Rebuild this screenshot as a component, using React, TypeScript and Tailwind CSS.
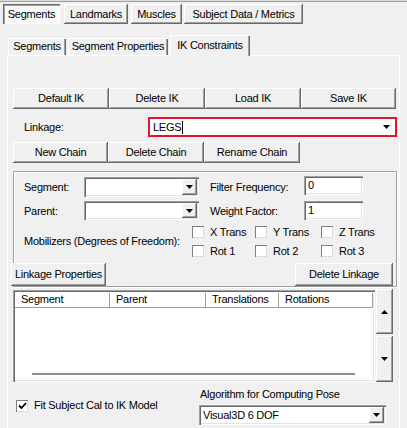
const raised =
  'bg-[#f0f0f0] shadow-[inset_-1px_-1px_#696969,inset_1px_1px_#ffffff,inset_-2px_-2px_#a0a0a0,inset_2px_2px_#f0f0f0]';
const sunken =
  'bg-white shadow-[inset_1px_1px_#a0a0a0,inset_2px_2px_#696969,inset_-1px_-1px_#ffffff,inset_-2px_-2px_#e3e3e3]';

function Down() {
  return (
    <svg width="7" height="4" viewBox="0 0 7 4">
      <polygon points="0,0 7,0 3.5,4" fill="#000" />
    </svg>
  );
}

function Up() {
  return (
    <svg width="7" height="4" viewBox="0 0 7 4">
      <polygon points="0,4 7,4 3.5,0" fill="#000" />
    </svg>
  );
}

function Btn({ className, children }: { className: string; children: React.ReactNode }) {
  return <div className={`${raised} flex shrink-0 items-center justify-center ${className}`}>{children}</div>;
}

function Combo({ className, value }: { className: string; value?: string }) {
  return (
    <div className={`${sunken} flex shrink-0 items-center p-[2px] ${className}`}>
      <div className="flex-1 pl-[2px]">{value}</div>
      <div className={`${raised} flex h-full w-[15px] items-center justify-center`}>
        <Down />
      </div>
    </div>
  );
}

function Field({ className, value }: { className: string; value: string }) {
  return <div className={`${sunken} flex shrink-0 items-center pl-[4px] ${className}`}>{value}</div>;
}

function Check({ label, checked }: { label?: string; checked?: boolean }) {
  return (
    <div className="flex items-center gap-[6px]">
      <div className="flex h-[12px] w-[12px] shrink-0 items-center justify-center bg-white shadow-[inset_1px_1px_#808080,inset_-1px_-1px_#dcdcdc]">
        {checked && (
          <svg width="9" height="8" viewBox="0 0 9 8">
            <path d="M1 3.5 L3.5 6 L8 1" stroke="#000" strokeWidth="1.8" fill="none" />
          </svg>
        )}
      </div>
      {label && <span>{label}</span>}
    </div>
  );
}

const columns = [
  { name: 'Segment', w: 'w-[95px]' },
  { name: 'Parent', w: 'w-[96px]' },
  { name: 'Translations', w: 'w-[73px]' },
  { name: 'Rotations', w: 'w-[94px]' },
];

export default function App() {
  return (
    <div className="flex h-[428px] w-[407px] flex-col overflow-hidden bg-[#f0f0f0] font-['Liberation_Sans',Arial,sans-serif] text-[11px] leading-[13px] tracking-[-0.25px] text-black">
      <div className="h-px bg-[#dadada]" />
      <div className="h-px bg-[#a0a0a0]" />
      <div className="h-px bg-[#f0f0f0]" />

      {/* top tabs */}
      <div className="mt-px flex h-[20px]">
        <div className="ml-[3px] flex w-[57px] items-center justify-center bg-[#f8f8f8] shadow-[inset_1px_1px_#696969,inset_2px_2px_#a0a0a0,inset_-1px_-1px_#ffffff]">
          Segments
        </div>
        <Btn className="ml-[4px] w-[64px]">Landmarks</Btn>
        <Btn className="ml-[3px] w-[51px]">Muscles</Btn>
        <Btn className="ml-[2px] w-[119px]">Subject Data / Metrics</Btn>
      </div>

      {/* inner tabs */}
      <div className="mt-[11px] flex h-[20px] items-end pl-[8px]">
        <div className="flex h-[17px] w-[58px] items-center justify-center shadow-[inset_1px_1px_#ffffff,inset_-1px_0_#696969,inset_-2px_0_#a0a0a0]">
          Segments
        </div>
        <div className="ml-[2px] flex h-[17px] w-[100px] items-center justify-center shadow-[inset_1px_1px_#ffffff,inset_-1px_0_#696969,inset_-2px_0_#a0a0a0]">
          Segment Properties
        </div>
        <div className="relative z-10 -mb-px ml-[2px] flex h-[21px] w-[80px] items-start justify-center bg-[#f0f0f0] pt-[4px] shadow-[inset_1px_1px_#ffffff,inset_-1px_0_#696969,inset_-2px_0_#a0a0a0]">
          IK Constraints
        </div>
      </div>

      {/* panel */}
      <div className="ml-[7px] flex w-[393px] flex-1 flex-col border-x border-t border-white">
        <div className="ml-[5px] mt-[32px] flex h-[21px]">
          <Btn className="w-[96px]">Default IK</Btn>
          <Btn className="w-[96px]">Delete IK</Btn>
          <Btn className="w-[96px]">Load IK</Btn>
          <Btn className="w-[95px]">Save IK</Btn>
        </div>

        <div className="mt-[8px] flex h-[20px] items-center">
          <div className="ml-[16px] w-[124px]">Linkage:</div>
          <div className="flex h-[20px] w-[249px] items-center border-2 border-[#e3142c] bg-white pl-[3px] pr-[5px]">
            <span>LEGS</span>
            <span className="ml-px h-[13px] w-px bg-black" />
            <span className="flex-1" />
            <Down />
          </div>
        </div>

        <div className="ml-[5px] mt-[5px] flex h-[21px]">
          <Btn className="w-[95px]">New Chain</Btn>
          <Btn className="w-[96px]">Delete Chain</Btn>
          <Btn className="w-[96px]">Rename Chain</Btn>
        </div>

        {/* chain group */}
        <div className="ml-[5px] mt-[8px] flex h-[116px] w-[384px] flex-col border border-[#a0a0a0] shadow-[inset_1px_1px_#ffffff,1px_1px_#ffffff]">
          <div className="mt-[5px] flex items-start">
            <div className="flex h-[20px] w-[70px] items-center pl-[10px]">Segment:</div>
            <Combo className="h-[20px] w-[115px]" />
            <div className="ml-[11px] flex h-[20px] w-[94px] items-center">Filter Frequency:</div>
            <Field className="-mt-px h-[19px] w-[59px]" value="0" />
          </div>
          <div className="mt-[4px] flex items-start">
            <div className="flex h-[20px] w-[70px] items-center pl-[10px]">Parent:</div>
            <Combo className="h-[19px] w-[115px]" />
            <div className="ml-[11px] flex h-[20px] w-[94px] items-center">Weight Factor:</div>
            <Field className="h-[19px] w-[59px]" value="1" />
          </div>
          <div className="mt-[5px] flex items-center">
            <div className="w-[178px] pl-[10px]">Mobilizers (Degrees of Freedom):</div>
            <div className="grid grid-cols-[63px_66px_60px] gap-y-[7px] [&>div]:h-[12px]">
              <Check label="X Trans" />
              <Check label="Y Trans" />
              <Check label="Z Trans" />
              <Check label="Rot 1" />
              <Check label="Rot 2" />
              <Check label="Rot 3" />
            </div>
          </div>
          <div className="mt-[6px] flex justify-between">
            <Btn className="-ml-[3px] h-[23px] w-[95px]">Linkage Properties</Btn>
            <Btn className="mr-[3px] h-[23px] w-[98px]">Delete Linkage</Btn>
          </div>
        </div>

        {/* chain table */}
        <div className="ml-[5px] mt-[3px] flex items-start">
          <div className={`${sunken} flex h-[92px] w-[362px] flex-col bg-[#f0f0f0] p-[2px]`}>
            <div className="flex h-[16px] border-b border-[#a0a0a0]">
              {columns.map((c) => (
                <div
                  key={c.name}
                  className={`${c.w} flex items-center pl-[6px] shadow-[inset_1px_1px_#ffffff,inset_-1px_0_#a0a0a0]`}
                >
                  {c.name}
                </div>
              ))}
            </div>
            <div className="h-[57px] bg-white" />
            <div className="flex flex-1 items-center pl-[17px] pt-[2px]">
              <div className="h-[2px] w-[323px] bg-[#8f8f8f]" />
            </div>
          </div>
          <div className="-mt-px ml-px flex w-[17px] flex-col">
            <Btn className="h-[45px]">
              <Up />
            </Btn>
            <Btn className="mt-[2px] h-[46px]">
              <Down />
            </Btn>
          </div>
        </div>

        {/* bottom */}
        <div className="flex">
          <div className="ml-[8px] w-[183px] pt-[17px]">
            <Check label="Fit Subject Cal to IK Model" checked />
          </div>
          <div className="flex flex-col">
            <div className="pl-px pt-[6px]">Algorithm for Computing Pose</div>
            <Combo className="mt-[4px] h-[20px] w-[187px]" value="Visual3D 6 DOF" />
          </div>
        </div>
      </div>
    </div>
  );
}
